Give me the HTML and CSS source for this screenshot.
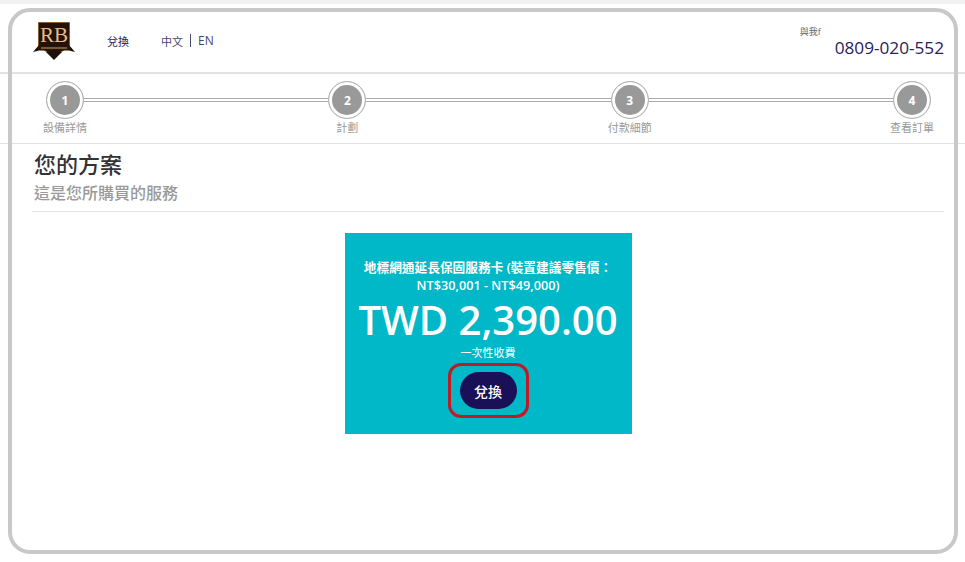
FILE: index.html
```html
<!DOCTYPE html>
<html lang="zh-Hant">
<head>
    <meta charset="UTF-8">
    <meta name="viewport" content="width=device-width, initial-scale=1.0">
    <title>您的方案</title>
    <link rel="stylesheet" href="styles.css">
</head>
<body>
    <div class="top-strip"></div>

    <header>
        <a href="#" class="logo">
            <svg width="42" height="40" viewBox="0 0 42 40" aria-hidden="true">
                <path d="M5.500 1.500H36.500V25L21 36L5.500 25Z" fill="#24120a" stroke="#8a5c2c"/>
                <path d="M0 31L6 24H36L42 31L36 29.500H6Z" fill="#1d1006"/>
                <path d="M5 25H37V29H5Z" fill="#2a1608"/>
                <path d="M8 27H34" stroke="#c89a5a" stroke-width="1"/>
                <path d="M13 31H29L21 39Z" fill="#1d1006"/>
                <text x="21" y="21" class="logo-text">RB</text>
            </svg>
        </a>
        <nav>
            <a href="#" class="nav-link">兌換</a>
            <div class="lang">
                <a href="#">中文</a>
                <span class="lang-sep"></span>
                <a href="#" class="lang-en">EN</a>
            </div>
        </nav>
        <div class="contact">
            <span class="contact-label">與我f</span>
            <span class="contact-phone">0809-020-552</span>
        </div>
    </header>

    <div class="stepper">
        <div class="step"><span class="step-num">1</span><span class="step-label">設備詳情</span></div>
        <div class="step-line"></div>
        <div class="step"><span class="step-num">2</span><span class="step-label">計劃</span></div>
        <div class="step-line"></div>
        <div class="step"><span class="step-num">3</span><span class="step-label">付款細節</span></div>
        <div class="step-line"></div>
        <div class="step"><span class="step-num">4</span><span class="step-label">查看訂單</span></div>
    </div>

    <main>
        <h1>您的方案</h1>
        <h2>這是您所購買的服務</h2>

        <div class="plan-card">
            <p class="plan-name">地標網通延長保固服務卡 (裝置建議零售價：NT$30,001 - NT$49,000)</p>
            <p class="plan-price">TWD 2,390.00</p>
            <p class="plan-note">一次性收費</p>
            <div class="plan-action">
                <button class="btn-redeem">兌換</button>
            </div>
        </div>
    </main>

    <!-- gray rounded frame drawn over the whole screenshot -->
    <div class="frame"></div>
</body>
</html>
```

FILE: styles.css
```css
:root {
    --navy: #1a1058;
    --teal: #00b8c8;
    --gray: #999999;
    --border: #e2e2e2;
}

* {
    margin: 0;
    padding: 0;
    box-sizing: border-box;
}

body {
    width: 965px;
    height: 562px;
    overflow: hidden;
    position: relative;
    background: #ffffff;
    font-family: 'Open Sans', 'Noto Sans CJK TC', sans-serif;
    color: #333333;
}

.top-strip {
    height: 8px;
    background: linear-gradient(#f1f1f1 0, #f1f1f1 4px, #ffffff 4px);
}

/* Header */
header {
    height: 66px;
    display: flex;
    align-items: flex-start;
    padding: 13px 21px 0 33px;
    border-bottom: 2px solid var(--border);
}

.logo {
    display: block;
    width: 42px;
    height: 40px;
}

.logo-text {
    font-family: 'Liberation Serif', serif;
    font-size: 21px;
    fill: #e4bd85;
    text-anchor: middle;
}

nav {
    display: flex;
    align-items: center;
    gap: 32px;
    margin: 11px 0 0 32px;
    font-size: 11px;
}

nav a {
    color: #2a2258;
    text-decoration: none;
}

.lang {
    display: flex;
    align-items: center;
    gap: 7px;
}

.lang a {
    color: #4a4470;
}

.lang-en {
    font-size: 12px;
}

.lang-sep {
    width: 1px;
    height: 13px;
    background: #4a4470;
}

.contact {
    margin-left: auto;
    display: flex;
    flex-direction: column;
    align-items: flex-start;
    padding-top: 5px;
}

.contact-label {
    font-size: 9px;
    line-height: 12px;
    white-space: nowrap;
    color: #666666;
}

.contact-phone {
    margin-left: 35px;
    font-size: 17.200px;
    line-height: 20px;
    color: #2a2258;
}

/* Steps */
.stepper {
    height: 70px;
    display: flex;
    padding: 7px 31px 0 43px;
    border-bottom: 1px solid var(--border);
}

.step {
    width: 44px;
    display: flex;
    flex-direction: column;
    align-items: center;
    flex-shrink: 0;
}

.step-num {
    width: 38px;
    height: 38px;
    display: flex;
    align-items: center;
    justify-content: center;
    border-radius: 50%;
    border: 1px solid #b5b5b5;
    background: #999999;
    box-shadow: inset 0 0 0 3px #ffffff;
    color: #ffffff;
    font-size: 12px;
    font-weight: 700;
}

.step-label {
    margin-top: 1px;
    font-size: 11px;
    line-height: 15px;
    white-space: nowrap;
    color: var(--gray);
}

.step-line {
    flex: 1;
    height: 4px;
    margin: 17px -3px 0;
    border-top: 1px solid #aaaaaa;
    border-bottom: 1px solid #aaaaaa;
}

/* Main Content */
main {
    padding: 5px 21px 0 32px;
}

h1 {
    padding-left: 2px;
    font-size: 22px;
    font-weight: 500;
    line-height: 30px;
    color: #333333;
}

h2 {
    padding: 2px 0 6px 2px;
    font-size: 16px;
    font-weight: 500;
    line-height: 24px;
    color: var(--gray);
    border-bottom: 1px solid var(--border);
}

.plan-card {
    width: 287px;
    height: 201px;
    margin: 21px auto 0;
    padding: 25px 10px 0;
    background: var(--teal);
    color: #ffffff;
    text-align: center;
}

.plan-name {
    font-size: 12.700px;
    font-weight: 600;
    line-height: 18px;
}

.plan-price {
    margin-top: 4px;
    font-size: 40px;
    font-weight: 600;
    line-height: 44px;
}

.plan-note {
    margin-top: 3px;
    font-size: 11px;
    line-height: 16px;
}

.plan-action {
    width: 81px;
    height: 55px;
    margin: 2px auto 0;
    display: flex;
    align-items: center;
    justify-content: center;
    border: 3px solid #c01a24;
    border-radius: 13px;
}

.btn-redeem {
    width: 57px;
    height: 37px;
    border: none;
    border-radius: 19px;
    background: var(--navy);
    color: #ffffff;
    font-family: inherit;
    font-size: 14px;
    font-weight: 500;
}

.frame {
    position: absolute;
    left: 8px;
    top: 8px;
    width: 950px;
    height: 546px;
    border: 4px solid #c8c8c8;
    border-radius: 22px;
    pointer-events: none;
}
```
